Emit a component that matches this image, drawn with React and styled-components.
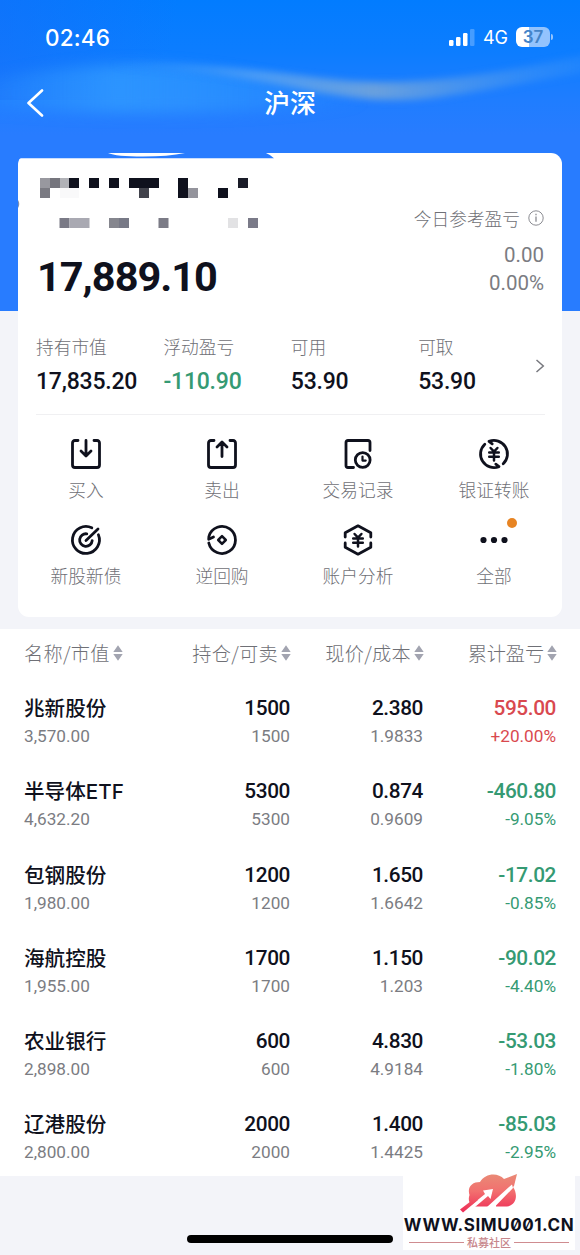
import styled, { createGlobalStyle } from "styled-components";

const ink = "#0f111d";
const grey = "#7b7c82";
const lightGrey = "#6f7076";
const green = "#359a73";
const red = "#d9494f";

const GlobalStyle = createGlobalStyle`
    * {
        box-sizing: border-box;
    }

    body {
        margin: 0;
        background: #f3f4f9;
        font-family: 'Noto Sans CJK SC', sans-serif;
        color: ${ink};
    }
`;

// data
const stats = [
    { label: "持有市值", value: "17,835.20" },
    { label: "浮动盈亏", value: "-110.90", color: green },
    { label: "可用", value: "53.90" },
    { label: "可取", value: "53.90" },
];

const columns = ["名称/市值", "持仓/可卖", "现价/成本", "累计盈亏"];

const holdings = [
    { name: "兆新股份", value: "3,570.00", held: "1500", price: "2.380", cost: "1.9833", profit: "595.00", rate: "+20.00%" },
    { name: "半导体ETF", value: "4,632.20", held: "5300", price: "0.874", cost: "0.9609", profit: "-460.80", rate: "-9.05%" },
    { name: "包钢股份", value: "1,980.00", held: "1200", price: "1.650", cost: "1.6642", profit: "-17.02", rate: "-0.85%" },
    { name: "海航控股", value: "1,955.00", held: "1700", price: "1.150", cost: "1.203", profit: "-90.02", rate: "-4.40%" },
    { name: "农业银行", value: "2,898.00", held: "600", price: "4.830", cost: "4.9184", profit: "-53.03", rate: "-1.80%" },
    { name: "辽港股份", value: "2,800.00", held: "2000", price: "1.400", cost: "1.4425", profit: "-85.03", rate: "-2.95%" },
];

// x, y, width, height, color of each masked block
const mosaic = [
    [0, 0, 10, 10, "#98989f"], [10, 0, 10, 10, "#75757d"], [20, 0, 9, 10, "#b1b2b7"], [29, 0, 10, 10, ink],
    [0, 10, 10, 10, "#7a7a82"], [20, 10, 19, 10, "#f9f9fa"],
    [49, 0, 10, 10, ink], [69, 0, 10, 10, ink], [89, 0, 30, 10, ink], [99, 10, 10, 10, "#42434c"],
    [138, 0, 10, 20, ink], [148, 10, 10, 10, "#94949c"], [178, 10, 10, 10, ink], [198, 0, 10, 10, "#1a1c28"],
    [19.5, 40, 10, 10, "#7a7a86"], [29.5, 40, 20, 10, "#a9a9b2"],
    [69, 40, 10, 10, "#85868e"], [79, 40, 10, 10, "#777986"],
    [118.5, 40, 10, 10, "#7b7b86"], [188, 40, 10, 10, "#e2e2e4"], [208, 40, 10, 10, "#7a7a88"],
];

const Yuan = () => (
    <path d="M11.6 9 15 12.6 18.4 9M10.2 13.6H19.8M10.2 17.8H19.8M15 13V21.4" strokeWidth="2.5" />
);

const actions = [
    {
        label: "买入",
        icon: <path d="M7 1.5H4Q1.5 1.5 1.5 4V26Q1.5 28.5 4 28.5H26Q28.5 28.5 28.5 26V4Q28.5 1.5 26 1.5H23M15 1.5V16.5M10 12 15 17 20 12" />,
    },
    {
        label: "卖出",
        icon: <path d="M7 1.5H4Q1.5 1.5 1.5 4V26Q1.5 28.5 4 28.5H26Q28.5 28.5 28.5 26V4Q28.5 1.5 26 1.5H23M15 17.5V3.5M10 8 15 3 20 8" />,
    },
    {
        label: "交易记录",
        icon: (
            <>
                <path d="M27 11.5V3.5Q27 1.5 25 1.5H5Q3 1.5 3 3.5V26.5Q3 28.5 5 28.5H10.5" />
                <circle cx="19.7" cy="21" r="7.4" />
                <path d="M19.5 17.5V21.6H22.7" strokeWidth="2.2" />
            </>
        ),
    },
    {
        label: "银证转账",
        icon: (
            <>
                <path d="M5.8 5.2A13.5 13.5 0 0 0 20 27.6L16.8 25.2M24.2 24.8A13.5 13.5 0 0 0 10 2.4L13.2 4.8" />
                <Yuan />
            </>
        ),
    },
    {
        label: "新股新债",
        icon: (
            <>
                <path d="M20.8 2.8A13.5 13.5 0 1 0 27.4 9.8" />
                <path d="M15.8 8.8A6.3 6.3 0 1 0 21.2 15.6M15 15.5 27 4" />
            </>
        ),
    },
    {
        label: "逆回购",
        icon: (
            <>
                <path d="M1.8 18A13.5 13.5 0 1 0 1.9 11.5L1.7 14.3 6.5 12" />
                <path d="M15 11.2 18.8 15 15 18.8 11.2 15Z" strokeWidth="2.5" />
            </>
        ),
    },
    {
        label: "账户分析",
        icon: (
            <>
                <path d="M2.2 12V7.8L15 .8 27.8 7.8V12M2.2 18V22.2L15 29.2 27.8 22.2V18" />
                <Yuan />
            </>
        ),
    },
    {
        label: "全部",
        dot: true,
        icon: (
            <g fill={ink} stroke="none">
                <circle cx="4.5" cy="15" r="3.1" />
                <circle cx="15" cy="15" r="3.1" />
                <circle cx="25.5" cy="15" r="3.1" />
            </g>
        ),
    },
];

const SortIcon = () => (
    <svg width="10" height="16" viewBox="0 0 10 16" fill="#a2a4b0">
        <path d="M5 .3 9.7 7H.3ZM5 15.7 9.7 9H.3Z" />
    </svg>
);

const App = () => {
    return (
        <Screen>
            <GlobalStyle />

            <Header>
                <Wave viewBox="0 0 580 150" aria-hidden="true">
                    <defs>
                        <linearGradient id="left" x1="0" y1="0" x2="1" y2="0">
                            <stop offset="0" stopColor="#339dff" stopOpacity=".1" />
                            <stop offset=".35" stopColor="#339dff" stopOpacity=".75" />
                            <stop offset=".65" stopColor="#339dff" stopOpacity=".5" />
                            <stop offset="1" stopColor="#339dff" stopOpacity="0" />
                        </linearGradient>
                        <linearGradient id="band" x1="0" y1="0" x2="1" y2="0">
                            <stop offset="0" stopColor="#3d9dfc" stopOpacity="0" />
                            <stop offset=".3" stopColor="#56a2f4" stopOpacity=".8" />
                            <stop offset=".55" stopColor="#6ea2dc" stopOpacity=".95" />
                            <stop offset="1" stopColor="#3a94fb" stopOpacity=".3" />
                        </linearGradient>
                        <filter id="soft" x="-10%" y="-50%" width="120%" height="200%" colorInterpolationFilters="sRGB">
                            <feGaussianBlur stdDeviation="3.5" />
                        </filter>
                        <filter id="softer" x="-10%" y="-50%" width="120%" height="200%" colorInterpolationFilters="sRGB">
                            <feGaussianBlur stdDeviation="7" />
                        </filter>
                    </defs>
                    <path d="M-20 82C60 64 130 62 190 68S310 86 370 102C280 112 160 118 -20 108Z" fill="url(#left)" filter="url(#softer)" />
                    <path d="M110 63C220 62 280 74 340 80S470 80 590 54V72C500 86 440 101 390 100S300 88 250 80 170 68 110 67Z" fill="url(#band)" filter="url(#soft)" />
                </Wave>
                <StatusBar>
                    <Clock>02:46</Clock>
                    <StatusIcons>
                        <svg width="26" height="17" viewBox="0 0 26 17" fill="#fff">
                            <rect x="0" y="11" width="4.5" height="6" rx="1.2" />
                            <rect x="7" y="8" width="4.5" height="9" rx="1.2" />
                            <rect x="14" y="4" width="4.5" height="13" rx="1.2" />
                            <rect x="21" y="0" width="4.5" height="17" rx="1.2" opacity=".25" />
                        </svg>
                        <Network>4G</Network>
                        <Battery>37</Battery>
                    </StatusIcons>
                </StatusBar>
                <TitleBar>
                    <svg width="18" height="28" viewBox="0 0 18 28" fill="none" stroke="#fff" strokeWidth="2.6" strokeLinecap="round" strokeLinejoin="round">
                        <path d="M16 1.5 2.5 14 16 26.5" />
                    </svg>
                    <Title>沪深</Title>
                </TitleBar>
            </Header>

            <Card>
                <CardEdge viewBox="0 0 256 58" aria-hidden="true">
                    <path d="M-1 -1H246Q251 1 256 5.3H3Q0 6 0 11H-1Z" fill="#287cff" />
                    <path d="M90 0H167Q150 3.5 125 3.5 98 3.5 90 0Z" fill="#fff" />
                    <path d="M0 47Q2.5 51 0 55Z" fill="#7f8fb0" />
                </CardEdge>
                <Summary>
                    <Account>
                        <svg width="220" height="50" viewBox="0 0 220 50">
                            {mosaic.map(([x, y, w, h, fill], i) => (
                                <rect key={i} x={x} y={y} width={w} height={h} fill={fill} />
                            ))}
                        </svg>
                        <Total>17,889.10</Total>
                    </Account>
                    <Today>
                        <TodayLabel>
                            今日参考盈亏
                            <svg width="16" height="16" viewBox="0 0 16 16" fill="none" stroke="#8b8c92" strokeWidth="1">
                                <circle cx="8" cy="8" r="7.2" />
                                <path d="M8 3.8V5.2M8 6.6V11.8" strokeWidth="1.3" />
                            </svg>
                        </TodayLabel>
                        <TodayValue>0.00</TodayValue>
                        <TodayValue>0.00%</TodayValue>
                    </Today>
                </Summary>

                <Stats>
                    {stats.map(({ label, value, color }) => (
                        <div key={label}>
                            <StatLabel>{label}</StatLabel>
                            <StatValue $color={color}>{value}</StatValue>
                        </div>
                    ))}
                    <svg width="10" height="14" viewBox="0 0 10 14" fill="none" stroke="#77787e" strokeWidth="1.5">
                        <path d="M1.5 1 8.3 7 1.5 13" />
                    </svg>
                </Stats>

                <Actions>
                    {actions.map(({ label, icon, dot }) => (
                        <Action key={label}>
                            <ActionIcon viewBox="0 0 30 30">{icon}</ActionIcon>
                            {label}
                            {dot && <Dot />}
                        </Action>
                    ))}
                </Actions>
            </Card>

            <Holdings>
                <HeadRow>
                    {columns.map((column) => (
                        <HeadCell key={column}>
                            {column}
                            <SortIcon />
                        </HeadCell>
                    ))}
                </HeadRow>
                {holdings.map((item) => {
                    const color = item.profit.startsWith("-") ? green : red;
                    return (
                        <Row key={item.name}>
                            <Cell>
                                <Name>{item.name}</Name>
                                <Sub>{item.value}</Sub>
                            </Cell>
                            <Cell>
                                <Main>{item.held}</Main>
                                <Sub>{item.held}</Sub>
                            </Cell>
                            <Cell>
                                <Main>{item.price}</Main>
                                <Sub>{item.cost}</Sub>
                            </Cell>
                            <Cell>
                                <Main $color={color}>{item.profit}</Main>
                                <Sub $color={color}>{item.rate}</Sub>
                            </Cell>
                        </Row>
                    );
                })}
            </Holdings>

            <HomeIndicator />

            <Watermark>
                <svg width="58" height="40" viewBox="0 0 58 40">
                    <defs>
                        <linearGradient id="cloud" gradientUnits="userSpaceOnUse" x1="0" y1="0" x2="0" y2="38">
                            <stop offset="0" stopColor="#e98a76" />
                            <stop offset=".45" stopColor="#f2706f" />
                            <stop offset="1" stopColor="#ee2d57" />
                        </linearGradient>
                    </defs>
                    <path d="M12 33C8 27 8.5 24 9.5 21 7 13 12 8 20 8 25-1 38-2 44 5L57 0 54 12 53 13C58 20 57 31 47 32.5H12Z" fill="url(#cloud)" />
                    <path d="M9 33 25 20 23 16.5 33 15 30.5 25 28 22 15 33V36H9ZM27 33 49 13 52 10.5 53 14 36 31.5V34H27Z" fill="#fff" />
                    <path d="M0 35.5 15 24 18 26 3 38.5Z" fill="url(#cloud)" />
                </svg>
                <Site>WWW.SIMU001.CN</Site>
                <Community>私募社区</Community>
            </Watermark>
        </Screen>
    );
}

const Screen = styled.div`
    position: relative;
    width: 580px;
    height: 1255px;
    overflow: hidden;
    background: #f3f4f9;
`;

const Header = styled.header`
    position: relative;
    height: 311px;
    margin-bottom: -158px;
    color: #fff;
    background: linear-gradient(100deg, rgba(24, 108, 248, 0.5) 0%, rgba(24, 108, 248, 0) 30%) 0 0 / 100% 100px no-repeat, linear-gradient(#027cff 0, #0c7dff 50px, #1f7dff 100px, #287cff 135px);
`;

const Wave = styled.svg`
    position: absolute;
    top: 0;
    left: 0;
    width: 580px;
    height: 150px;
`;

const StatusBar = styled.div`
    position: relative;
    display: flex;
    justify-content: space-between;
    align-items: center;
    height: 74px;
    padding: 0 30px 0 45px;
    font-family: Inter, sans-serif;
`;

const Clock = styled.span`
    font-size: 22.5px;
    font-weight: 500;
    letter-spacing: 0.2px;
`;

const StatusIcons = styled.div`
    display: flex;
    align-items: center;
`;

const Network = styled.span`
    margin: 1px 8px 0;
    font-size: 18px;
`;

const Battery = styled.span`
    position: relative;
    width: 34px;
    height: 20px;
    border-radius: 6px;
    text-align: center;
    font-size: 17px;
    font-weight: 600;
    line-height: 20px;
    color: #4483c8;
    background: linear-gradient(90deg, #fff 37%, #93c3fd 37%);

    &::after {
        content: '';
        position: absolute;
        top: 7px;
        right: -3px;
        width: 2px;
        height: 6px;
        border-radius: 0 2px 2px 0;
        background: #93c3fd;
    }
`;

const TitleBar = styled.div`
    position: relative;
    display: grid;
    grid-template-columns: 60px 1fr 60px;
    align-items: center;
    height: 57px;

    svg {
        margin-left: 26px;
    }
`;

const Title = styled.h1`
    margin: -2px 0 0;
    text-align: center;
    font-size: 26px;
    font-weight: 500;
    line-height: 40px;
`;

const Card = styled.section`
    position: relative;
    height: 464px;
    margin: 0 18px 12px;
    border-radius: 11px;
    background: #fff;
`;

const CardEdge = styled.svg`
    position: absolute;
    top: 0;
    left: 0;
    width: 256px;
    height: 58px;
    overflow: visible;
`;

const Summary = styled.div`
    display: flex;
    justify-content: space-between;
    height: 176px;
    padding: 25px 18px 0 22px;
`;

const Account = styled.div`
    svg {
        display: block;
    }
`;

const Total = styled.div`
    margin: 24px 0 0 -3px;
    font-family: Roboto, sans-serif;
    font-size: 41.5px;
    font-weight: 700;
    line-height: 50px;
    letter-spacing: -1px;
`;

const Today = styled.div`
    padding-top: 26px;
    text-align: right;
    color: ${grey};
`;

const TodayLabel = styled.div`
    display: flex;
    align-items: center;
    gap: 8px;
    height: 28px;
    margin-bottom: 9px;
    font-size: 17.7px;
    font-weight: 300;
    color: ${lightGrey};
`;

const TodayValue = styled.div`
    font-family: Roboto, sans-serif;
    font-size: 20.5px;
    line-height: 28px;
`;

const Stats = styled.div`
    position: relative;
    display: grid;
    grid-template-columns: repeat(4, 127.4px);
    height: 86px;
    margin: 0 17px 0 18px;
    padding-top: 3px;
    border-bottom: 1px solid #f0f0f2;

    svg {
        position: absolute;
        top: 30px;
        right: 0;
    }
`;

const StatLabel = styled.div`
    font-size: 17.7px;
    font-weight: 300;
    line-height: 28px;
    color: ${lightGrey};
`;

const StatValue = styled.div`
    margin-top: 8px;
    font-family: Roboto, sans-serif;
    font-size: 23px;
    font-weight: 500;
    line-height: 28px;
    letter-spacing: -0.2px;
    color: ${({ $color }) => $color || ink};
`;

const Actions = styled.div`
    display: grid;
    grid-template-columns: repeat(4, 1fr);
    grid-auto-rows: 86px;
    padding-top: 24px;
`;

const Action = styled.div`
    position: relative;
    display: flex;
    flex-direction: column;
    align-items: center;
    gap: 6px;
    font-size: 17.7px;
    font-weight: 300;
    line-height: 28px;
    color: ${lightGrey};
`;

const ActionIcon = styled.svg`
    width: 30px;
    height: 30px;
    overflow: visible;
    fill: none;
    stroke: ${ink};
    stroke-width: 2.8;
    stroke-linecap: round;
    stroke-linejoin: round;
`;

const Dot = styled.span`
    position: absolute;
    top: -7px;
    right: 45px;
    width: 10px;
    height: 10px;
    border-radius: 50%;
    background: #e78423;
`;

const Holdings = styled.section`
    height: 547px;
    background: #fff;
`;

const Row = styled.div`
    display: grid;
    grid-template-columns: 1fr 126px 133px 133px;
    height: 83.3px;
    padding: 17px 24px 0;
`;

const HeadRow = styled(Row)`
    height: 47px;
    padding: 0 23px 0 24px;
`;

const HeadCell = styled.div`
    display: flex;
    justify-content: flex-end;
    align-items: center;
    gap: 3px;
    font-size: 19.2px;
    font-weight: 300;
    letter-spacing: 0.3px;
    white-space: nowrap;
    color: ${lightGrey};

    &:first-child {
        justify-content: flex-start;
    }

    &:last-child {
        letter-spacing: -0.1px;
    }
`;

const Cell = styled.div`
    text-align: right;
    font-family: Roboto, sans-serif;

    &:first-child {
        text-align: left;
    }
`;

const Name = styled.div`
    height: 28px;
    font-family: Inter, 'Noto Sans CJK SC', sans-serif;
    font-size: 20.6px;
    font-weight: 500;
    line-height: 31px;
`;

const Main = styled.div`
    height: 28px;
    font-size: 20.8px;
    font-weight: 500;
    line-height: 30px;
    letter-spacing: -0.4px;
    color: ${({ $color }) => $color || ink};
`;

const Sub = styled.div`
    margin-top: 1px;
    font-size: 17.2px;
    line-height: 29px;
    color: ${({ $color }) => $color || grey};
`;

const HomeIndicator = styled.div`
    width: 206px;
    height: 8px;
    margin: 59px 0 0 187px;
    border-radius: 4px;
    background: #000;
`;

const Watermark = styled.div`
    position: absolute;
    left: 403px;
    top: 1174px;
    display: flex;
    flex-direction: column;
    align-items: center;
    width: 172px;
    height: 76px;
    background: #fff;
`;

const Site = styled.div`
    margin: 1px 0 -1px;
    font-family: Inter, sans-serif;
    font-size: 17px;
    font-weight: 700;
    line-height: 20px;
    letter-spacing: 0.55px;
    font-feature-settings: 'zero';
`;

const Community = styled.div`
    display: flex;
    align-items: center;
    gap: 3px;
    width: 160px;
    font-size: 11px;
    font-weight: 500;
    line-height: 16px;
    white-space: nowrap;
    color: #c7868b;

    &::before,
    &::after {
        content: '';
        flex: 1;
        height: 1px;
        background: #cf8c90;
    }
`;

export default App;
